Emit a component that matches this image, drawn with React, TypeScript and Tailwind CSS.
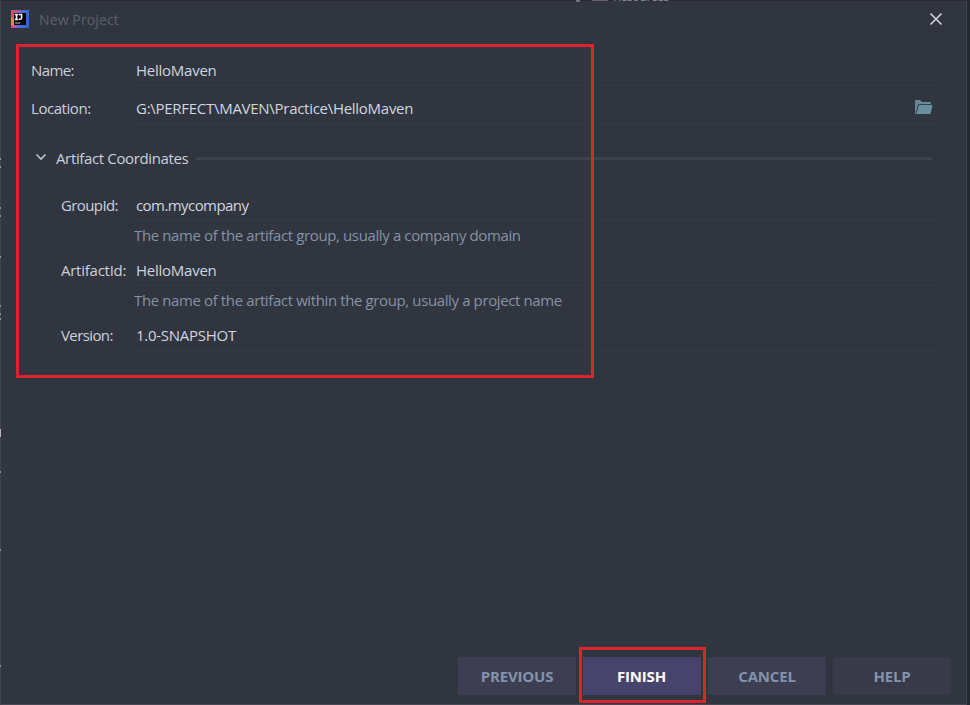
import type { ReactNode } from "react";

const hintClass = "mb-[5px] flex h-[30px] items-center pb-[2px] pl-[134px] text-[#8492a6] whitespace-nowrap";

type FieldProps = {
  label: string;
  labelClass: string;
  valueClass: string;
  rowClass: string;
  indent?: boolean;
  value: string;
  children?: ReactNode;
};

function Field({ label, labelClass, valueClass, rowClass, indent, value, children }: FieldProps) {
  return (
    <div className={`flex items-stretch pr-[30px] whitespace-nowrap ${rowClass} ${indent ? "pl-[61px]" : "pl-[31px]"}`}>
      <div className={`flex shrink-0 items-center pb-px text-[#c9d1dc] ${indent ? "w-[70px]" : "w-[100px]"}`}>
        <span className={labelClass}>{label}</span>
      </div>
      <div className="flex flex-1 items-center justify-between border-b border-[#2d3c50] pl-[5px] text-[#d0d6df]">
        <span className={valueClass}>{value}</span>
        {children}
      </div>
    </div>
  );
}

function Logo() {
  return (
    <svg className="size-[18px]" viewBox="0 0 18 18">
      <defs>
        <linearGradient id="edge" x1="0" y1="0.3" x2="1" y2="0.5">
          <stop offset="0" stopColor="#f04462" />
          <stop offset="0.35" stopColor="#a654b8" />
          <stop offset="0.65" stopColor="#3b72df" />
          <stop offset="1" stopColor="#3262c8" />
        </linearGradient>
      </defs>
      <rect width="18" height="18" fill="url(#edge)" />
      <path d="M0 7l4 3v6l-4-1z" fill="#ef8250" />
      <rect x="3" y="3" width="12" height="12" fill="#08080c" />
      <path d="M3.8 4.5h3.4M5.5 4.5v5M3.8 9.5h3.4M8 4.5h3.3M10.6 4.5v3.4q0 1.7-2.8 1.4" stroke="#f5f5f7" strokeWidth="1.5" fill="none" />
      <path d="M4 13h5" stroke="#b5b5b8" strokeWidth="1" />
    </svg>
  );
}

function FolderIcon() {
  return (
    <svg className="mr-[3px] mb-[3px] h-[16px] w-[19px]" viewBox="0 0 19 16">
      <path d="M1 15V2q0-1 1-1h4l2 2h8q1 0 1 1v1H4.6L2 15z" fill="#688898" />
      <path d="M4.4 5.8L2 14" stroke="#35424d" strokeWidth="1" fill="none" />
      <path d="M5 6H18q.6 0 .5.6L16.8 14q-.2 1-1 1H2.3z" fill="#6b8da0" />
      <path d="M4.6 5.5h13" stroke="#35424d" strokeWidth="1" />
    </svg>
  );
}

const buttonClass = "flex h-[38px] w-[118px] items-center justify-center font-bold";

/* Slivers of the editor window that stays visible behind the dialog. */
function BackgroundSlivers() {
  return (
    <>
      <div className="absolute top-0 left-[576px] flex h-[3px] items-end overflow-hidden text-[13px] leading-none text-[#858991]">
        <span className="mb-px h-[2px] w-[4px] bg-[#6d7078]" />
        <span className="mb-[2px] ml-[12px] h-px w-[16px] bg-[#6b5f70]" />
        <span className="ml-[5px] tracking-[-0.75px]">Resources</span>
      </div>
      <svg className="absolute top-0 left-0 h-[705px] w-[2px]" viewBox="0 0 2 705">
        <path
          d="M.5 158v2M.5 166v2M.5 207v2M.5 215v2M.5 256v2M.5 305v2M.5 313v2M.5 318v2M.5 471v2M.5 549v2M.5 665v2"
          stroke="#8d929a"
        />
        <path d="M.5 429v8" stroke="#b0b4ba" />
      </svg>
    </>
  );
}

export default function App() {
  return (
    <div className="relative flex h-[705px] w-[970px] overflow-hidden bg-[#24282f] font-['Open_Sans','Noto_Sans',sans-serif] text-[15px]">
      <div className="flex w-[967px] flex-col border-t border-r border-b border-l border-t-[#292c34] border-r-[#424750] border-b-[#464952] border-l-[#3d424b] bg-[#31353f]">
        <header className="-ml-px flex h-[48px] shrink-0 items-start pt-[9px] pl-[11px] pr-[23px]">
          <Logo />
          <h1 className="ml-[10px] flex h-[18px] flex-1 items-center text-[#5b616b]">
            <span className="text-[14px] tracking-[0.12px]">New Project</span>
          </h1>
          <svg className="mt-[2px] size-[14px]" viewBox="0 0 14 14">
            <path d="M1.5 1.5l11 11M12.5 1.5l-11 11" stroke="#cdd0d4" strokeWidth="1.7" />
          </svg>
        </header>

        <main className="-ml-px flex-1">
          <Field
            label="Name:"
            value="HelloMaven"
            labelClass="tracking-[-0.6px]"
            valueClass="tracking-[-0.25px]"
            rowClass="h-[37px] pt-[6px]"
          />
          <Field
            label="Location:"
            value="G:\PERFECT\MAVEN\Practice\HelloMaven"
            labelClass="tracking-[-0.45px]"
            valueClass="tracking-[-0.28px]"
            rowClass="h-[38px] pt-[7px]"
          >
            <FolderIcon />
          </Field>
          <div className="flex h-[67px] items-center pt-px pr-[34px] pl-[35px] text-[#c9d1dc]">
            <svg className="mr-[9px] h-[12px] w-[12px]" viewBox="0 0 12 12">
              <path d="M1.5 2.5L6 7l4.5-4.5" stroke="#bfc5ce" strokeWidth="1.6" fill="none" />
            </svg>
            <h2 className="w-[140px] tracking-[-0.36px] whitespace-nowrap">Artifact Coordinates</h2>
            <div className="h-[3px] flex-1 bg-[#3c414b]" />
          </div>
          <Field
            indent
            label="GroupId:"
            value="com.mycompany"
            labelClass="tracking-[-0.6px]"
            valueClass="tracking-[-0.57px]"
            rowClass="h-[30px]"
          />
          <p className={hintClass}>
            <span className="tracking-[-0.38px]">The name of the artifact group, usually a company domain</span>
          </p>
          <Field
            indent
            label="ArtifactId:"
            value="HelloMaven"
            labelClass="tracking-[-0.25px]"
            valueClass="tracking-[-0.25px]"
            rowClass="h-[30px]"
          />
          <p className={hintClass}>
            <span className="tracking-[-0.385px]">The name of the artifact within the group, usually a project name</span>
          </p>
          <Field
            indent
            label="Version:"
            value="1.0-SNAPSHOT"
            labelClass="tracking-[-0.6px]"
            valueClass="tracking-[-0.27px]"
            rowClass="h-[30px]"
          />
        </main>

        <footer className="mb-[9px] flex shrink-0 justify-end gap-[7px] pr-[15px] tracking-[-0.2px]">
          <button className={`${buttonClass} bg-[#3d3e51] text-[#8193ae]`}>PREVIOUS</button>
          <button className={`${buttonClass} bg-[#46446c] pr-px text-white`}>FINISH</button>
          <button className={`${buttonClass} bg-[#3d3e51] text-[#8193ae]`}>CANCEL</button>
          <button className={`${buttonClass} bg-[#383a49] text-[#8193ae]`}>HELP</button>
        </footer>
      </div>

      <BackgroundSlivers />
      <div className="absolute top-[44px] left-[16px] h-[334px] w-[578px] border-3 border-[#dd232c]" />
      <div className="absolute top-[647px] left-[579px] h-[56px] w-[127px] border-3 border-[#dd232c]" />
    </div>
  );
}
